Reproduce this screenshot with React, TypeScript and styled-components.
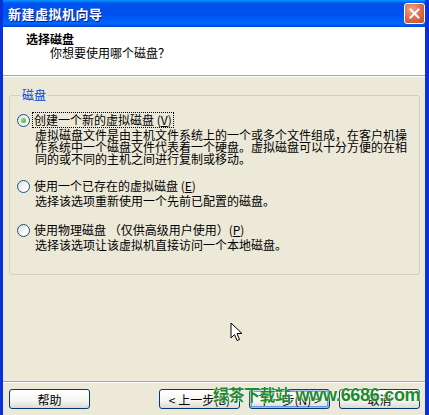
import React from 'react'
import styled, { createGlobalStyle } from 'styled-components'

const GlobalStyle = createGlobalStyle`
  html, body {
    margin: 0;
    padding: 0;
    background: #ece9d8;
    overflow: hidden;
  }
  * {
    box-sizing: border-box;
  }
`

const FONT = `"Noto Sans CJK SC", "DejaVu Sans", sans-serif`

const Window = styled.div`
  position: relative;
  width: 429px;
  height: 415px;
  display: flex;
  flex-direction: column;
  background: #ece9d8;
  border-left: 3px solid #0831d9;
  border-right: 4px solid #0831d9;
  font-family: ${FONT};
  font-size: 12px;
  color: #000;
  overflow: hidden;
`

const TitleBar = styled.div`
  height: 27px;
  margin: 0 -4px 0 -3px;
  display: flex;
  align-items: center;
  justify-content: space-between;
  padding: 0 4px 0 8px;
  background: linear-gradient(
    #0997ff 0%,
    #0053ee 12%,
    #0050ee 50%,
    #0066ff 88%,
    #0043cf 100%
  );
`

const Title = styled.span`
  color: #fff;
  font-weight: bold;
  font-size: 13px;
  letter-spacing: 0.5px;
  text-shadow: 1px 1px 0 #0a1e7a;
`

const CloseButton = styled.div`
  width: 21px;
  height: 21px;
  border: 1px solid #fff;
  border-radius: 3px;
  background: radial-gradient(circle at 35% 30%, #f0a88a 0%, #e2704c 45%, #c44a2a 100%);
  display: flex;
  align-items: center;
  justify-content: center;
`

const Header = styled.div`
  height: 49px;
  background: #fff;
  padding: 5px 0 0 23px;
  border-bottom: 1px solid #aca899;
  box-shadow: 0 1px 0 #fff;
`

const HeaderTitle = styled.div`
  font-weight: bold;
  line-height: 14px;
`

const HeaderSub = styled.div`
  line-height: 14px;
  padding-left: 24px;
`

const Body = styled.div`
  flex: 1;
  padding: 12px 5px 0 6px;
`

const GroupBox = styled.fieldset`
  margin: 0;
  padding: 11px 6px 20px 7px;
  border: 1px solid #d0d0bf;
  border-radius: 3px;
  height: 187px;
`

const GroupLabel = styled.legend`
  color: #0046d5;
  padding: 0 2px;
  margin-left: 3px;
  line-height: 14px;
`

const Option = styled.div<{ $gap?: number }>`
  margin-top: ${(p) => p.$gap ?? 0}px;
`

const OptionRow = styled.label`
  display: flex;
  align-items: center;
  gap: 3px;
  line-height: 14px;
`

const Radio = styled.span<{ $checked?: boolean }>`
  width: 13px;
  height: 13px;
  flex: none;
  border-radius: 50%;
  border: 1px solid #1c5180;
  background: linear-gradient(135deg, #dcdcd5 0%, #fff 70%);
  display: flex;
  align-items: center;
  justify-content: center;
  &::after {
    content: '';
    display: ${(p) => (p.$checked ? 'block' : 'none')};
    width: 5px;
    height: 5px;
    border-radius: 50%;
    background: radial-gradient(circle at 40% 40%, #8ee68e, #21a121);
  }
`

const OptionText = styled.span<{ $focused?: boolean }>`
  padding: 0 1px;
  outline: ${(p) => (p.$focused ? '1px dotted #000' : 'none')};
`

const Key = styled.span`
  text-decoration: underline;
`

const Description = styled.div`
  padding-left: 18px;
  line-height: 12px;
  margin-top: 2px;
`

const Footer = styled.div`
  border-top: 1px solid #aca899;
  box-shadow: inset 0 1px 0 #fff;
  padding: 7px 5px 6px 6px;
  display: flex;
  align-items: center;
`

const Button = styled.button<{ $default?: boolean }>`
  width: 81px;
  height: 20px;
  padding: 0;
  font-family: ${FONT};
  font-size: 12px;
  color: #000;
  border: 1px solid #003c74;
  border-radius: 3px;
  background: linear-gradient(#fff 0%, #f6f5f0 60%, #dcdad0 100%);
  box-shadow: ${(p) =>
    p.$default ? 'inset 0 0 0 1px #9cc0f0, inset 0 0 0 2px #6a98e0' : 'none'};
  margin-left: 9px;
  &:first-child {
    margin-left: 0;
    margin-right: auto;
  }
`

const Watermark = styled.div`
  position: absolute;
  left: 210px;
  top: 382px;
  display: flex;
  align-items: baseline;
  gap: 5px;
  color: #1f8a2e;
  font-weight: bold;
  text-shadow: 0 0 2px #fff, 0 0 1px #fff;
  white-space: nowrap;
`

const MarkCn = styled.span`
  font-family: "Noto Sans CJK SC", sans-serif;
  font-size: 16px;
  letter-spacing: -0.5px;
`

const MarkEn = styled.span`
  font-family: "Liberation Sans", Arial, sans-serif;
  font-size: 18px;
  letter-spacing: -0.3px;
`

const Cursor = styled.svg`
  position: absolute;
  left: 227px;
  top: 322px;
`

export default function App() {
  return (
    <>
      <GlobalStyle />
      <Window>
        <TitleBar>
          <Title>新建虚拟机向导</Title>
          <CloseButton>
            <svg width="11" height="11" viewBox="0 0 11 11">
              <path d="M1.5 1.5 L9.5 9.5 M9.5 1.5 L1.5 9.5" stroke="#fff" strokeWidth="2" strokeLinecap="square" />
            </svg>
          </CloseButton>
        </TitleBar>
        <Header>
          <HeaderTitle>选择磁盘</HeaderTitle>
          <HeaderSub>你想要使用哪个磁盘？</HeaderSub>
        </Header>
        <Body>
          <GroupBox>
            <GroupLabel>磁盘</GroupLabel>
            <Option>
              <OptionRow>
                <Radio $checked />
                <OptionText $focused>
                  创建一个新的虚拟磁盘 (<Key>V</Key>)
                </OptionText>
              </OptionRow>
              <Description>
                虚拟磁盘文件是由主机文件系统上的一个或多个文件组成，在客户机操作系统中一个磁盘文件代表着一个硬盘。虚拟磁盘可以十分方便的在相同的或不同的主机之间进行复制或移动。
              </Description>
            </Option>
            <Option $gap={14}>
              <OptionRow>
                <Radio />
                <OptionText>
                  使用一个已存在的虚拟磁盘 (<Key>E</Key>)
                </OptionText>
              </OptionRow>
              <Description>选择该选项重新使用一个先前已配置的磁盘。</Description>
            </Option>
            <Option $gap={16}>
              <OptionRow>
                <Radio />
                <OptionText>
                  使用物理磁盘 （仅供高级用户使用）(<Key>P</Key>)
                </OptionText>
              </OptionRow>
              <Description>选择该选项让该虚拟机直接访问一个本地磁盘。</Description>
            </Option>
          </GroupBox>
        </Body>
        <Footer>
          <Button>帮助</Button>
          <Button>&lt; 上一步(B)</Button>
          <Button $default>下一步(N) &gt;</Button>
          <Button>取消</Button>
        </Footer>
        <Cursor width="13" height="22" viewBox="0 0 13 22">
          <path
            d="M1 1 L1 16 L4.5 12.5 L7 18.5 L9.5 17.5 L7 11.5 L12 11.5 Z"
            fill="#fff"
            stroke="#000"
            strokeWidth="1"
            strokeLinejoin="miter"
          />
        </Cursor>
        <Watermark>
          <MarkCn>绿茶下载站</MarkCn>
          <MarkEn>www.6686.com</MarkEn>
        </Watermark>
      </Window>
    </>
  )
}
